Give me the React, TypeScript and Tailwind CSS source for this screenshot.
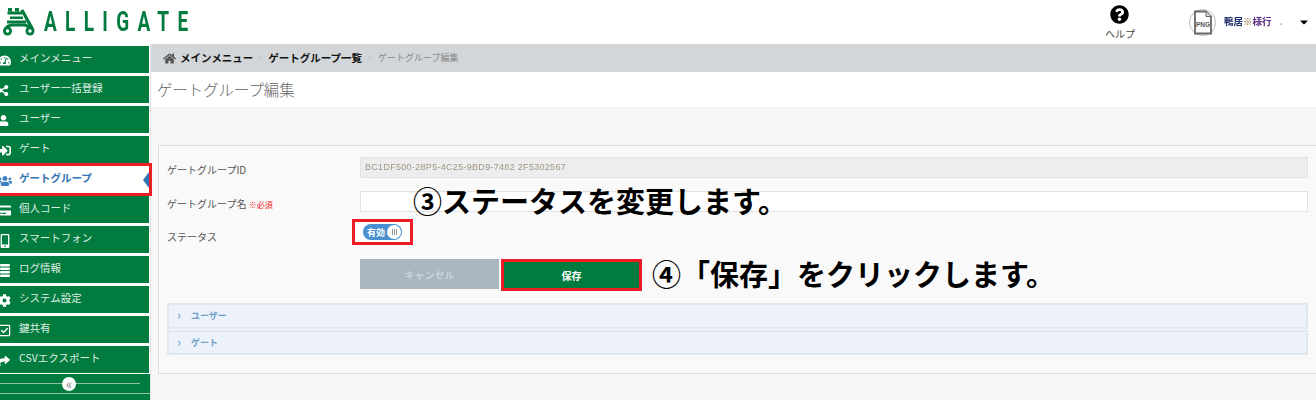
import type { ReactNode } from "react";
import {
  FaCaretDown,
  FaCog,
  FaCreditCard,
  FaHome,
  FaMobileAlt,
  FaQuestionCircle,
  FaRegCheckSquare,
  FaShare,
  FaShareAlt,
  FaSignInAlt,
  FaTachometerAlt,
  FaUser,
  FaUsers,
} from "react-icons/fa";

const jp = "font-['Noto_Sans_CJK_JP','Noto_Sans',sans-serif]";

interface NavItem {
  label: string;
  icon: ReactNode;
  active?: boolean;
}

// stacked bars for the log entry, thicker than the icon packs' versions
function LogIcon() {
  return (
    <svg width="13" height="13" viewBox="0 0 13 13" fill="currentColor" className="block">
      <rect x="2" y="0" width="10" height="2.4" rx="1" />
      <rect x="2" y="3.5" width="10" height="2.4" rx="1" />
      <rect x="2" y="7" width="10" height="2.4" rx="1" />
      <rect x="2" y="10.5" width="10" height="2.4" rx="1" />
    </svg>
  );
}

const navItems: NavItem[] = [
  { label: "メインメニュー", icon: <FaTachometerAlt size={13} /> },
  { label: "ユーザー一括登録", icon: <FaShareAlt size={11} /> },
  { label: "ユーザー", icon: <FaUser size={11} /> },
  { label: "ゲート", icon: <FaSignInAlt size={13} /> },
  { label: "ゲートグループ", icon: <FaUsers size={14} />, active: true },
  { label: "個人コード", icon: <FaCreditCard size={13} /> },
  { label: "スマートフォン", icon: <FaMobileAlt size={14} /> },
  { label: "ログ情報", icon: <LogIcon /> },
  { label: "システム設定", icon: <FaCog size={13} /> },
  { label: "鍵共有", icon: <FaRegCheckSquare size={13} /> },
  { label: "CSVエクスポート", icon: <FaShare size={12} /> },
];

function Logo() {
  return (
    <div className="flex items-center">
      <svg width="36" height="44" viewBox="0 0 36 44" fill="none" className="shrink-0">
        <g fill="#027b3f">
          <rect x="8" y="8" width="4" height="3.5" />
          <rect x="15" y="8" width="4" height="3.5" />
          <rect x="7.5" y="11.5" width="16" height="3" />
          <rect x="10" y="16.5" width="13" height="2.5" />
          <rect x="7" y="20.5" width="19" height="3" />
          <path d="M20.5 10l3-.5 10.5 19-3.5 1.5z" />
          <circle cx="7.5" cy="31" r="4.5" />
          <circle cx="30" cy="31" r="4.5" />
        </g>
        <path d="M5 30c1-3 4-5 8-5h11c3 0 5 2 7 5" stroke="#027b3f" strokeWidth="3" />
        <circle cx="7.5" cy="31" r="1.7" fill="#fff" />
        <circle cx="30" cy="31" r="1.7" fill="#fff" />
      </svg>
      <span className="ml-[8px] block w-[150px] origin-left scale-x-[0.68] whitespace-nowrap font-['Roboto',sans-serif] text-[28px] leading-none font-bold tracking-[12.2px] text-[#027b3f]">
        ALLIGATE
      </span>
    </div>
  );
}

function Header() {
  return (
    <header className="flex h-[44px] items-center bg-white">
      <Logo />
      <div className="ml-auto flex h-full">
        <div className="mr-px flex w-[30px] flex-col items-center pt-[5px] text-black">
          <FaQuestionCircle size={19} className="-ml-[2px]" />
          <span className="mt-[3px] text-[10px] leading-[14px] whitespace-nowrap text-[#444]">ヘルプ</span>
        </div>
        <div className="ml-[54px] flex items-center">
          <div className="-ml-px flex h-[27px] w-[27px] items-center justify-center rounded-full border border-[#bbb]">
            <svg width="20" height="25" viewBox="0 0 20 24">
              <path d="M2 1h11l5 5v17H2z" fill="#fff" stroke="#666" strokeWidth="1.8" />
              <path d="M13 1v5h5" fill="#ddd" stroke="#666" strokeWidth="1" />
              <text x="10" y="16" textAnchor="middle" fontSize="6.5" fontWeight="700" fill="#555" fontFamily="Liberation Sans">
                PNG
              </text>
            </svg>
          </div>
          <div className="ml-[8px] flex w-[61px] items-center text-[9.5px] leading-none font-bold blur-[0.5px]">
            <span className="text-[#1d2c6b]">鴨居</span>
            <span className="text-[#8a6d2f]">※</span>
            <span className="text-[#5a2d82]">様行</span>
            <span className="ml-[8px] text-[#9ab]">.</span>
          </div>
          <FaCaretDown size={12} className="mr-[6px] ml-[13px] text-black" />
        </div>
      </div>
    </header>
  );
}

function Sidebar() {
  return (
    <aside className="flex w-[151px] shrink-0 flex-col border-r border-[#e4e6e8] bg-white pt-[2px]">
      <ul className="flex w-[149px] flex-col gap-[3px]">
        {navItems.map((item) => (
          <li
            key={item.label}
            className={
              item.active
                ? "relative z-10 flex h-[27px] items-center bg-white text-[#2f74b5] outline-[3px] outline-[#ee1c25]"
                : "flex h-[27px] items-center bg-[#027b3f] text-[#dfeee5]"
            }
          >
            <span className={item.active ? "flex w-[19px] justify-start pt-[2px] text-[#3b7fc0]" : "flex w-[19px] justify-start pt-[2px] text-white"}>
              <span className="-ml-[2px]">{item.icon}</span>
            </span>
            <span className={item.active ? "pb-[3px] text-[10.5px] font-bold" : "pb-[3px] text-[10.5px]"}>{item.label}</span>
            {item.active && (
              <span className="absolute top-[6px] right-0 h-0 w-0 border-y-[8px] border-r-[6px] border-y-transparent border-r-[#2f74b5]" />
            )}
          </li>
        ))}
      </ul>
      <div className="mt-[1px] flex flex-1 flex-col bg-[#027b3f]">
        <div className="relative h-[20px] border-b border-[#8fbfa6]">
          <div className="mt-[9px] h-px w-[140px] bg-[#8fbfa6]" />
          <div className="absolute top-[3px] left-[62px] flex h-[14px] w-[14px] items-center justify-center rounded-full bg-white pb-[2px] text-[13px] leading-none text-[#888]">
            «
          </div>
        </div>
      </div>
    </aside>
  );
}

function Breadcrumb() {
  return (
    <nav className="flex h-[28px] items-center bg-[#d3d6d9] pl-[12px] text-[10.5px]">
      <FaHome size={13} className="text-[#555]" />
      <span className="ml-[4px] font-bold text-[#111]">メインメニュー</span>
      <span className="mx-[5px] w-[5px] text-[9px] text-[#bbb]">›</span>
      <span className="font-bold text-[#111]">ゲートグループ一覧</span>
      <span className="mx-[6px] w-[4px] text-[9px] text-[#bbb]">›</span>
      <span className="text-[9px] text-[#888]">ゲートグループ編集</span>
    </nav>
  );
}

function FormRow({ label, children, className, labelClass }: { label: ReactNode; children: ReactNode; className: string; labelClass: string }) {
  return (
    <div className={`flex items-center ${className}`}>
      <div className={`w-[193px] text-[10px] text-[#555] ${labelClass}`}>{label}</div>
      {children}
    </div>
  );
}

function AccordionRow({ label }: { label: string }) {
  return (
    <div className="flex h-[25.5px] items-center border-2 border-[#e0e7f0] bg-[#edf2fa] pl-[8px] text-[9px] font-bold text-[#6f9fc9]">
      <span className="w-[14px] pb-[2px] text-[13px] leading-none font-normal">›</span>
      {label}
    </div>
  );
}

function EditPanel() {
  return (
    <section className="mt-[37px] ml-[7px] h-[229px] border-y border-l border-[#d7dfe6] bg-[#f9f9f9] pt-[11px] pr-[8px] pl-[8px]">
      <FormRow label="ゲートグループID" className="h-[21px]" labelClass="pt-[4px]">
        <div className="flex h-[21px] flex-1 items-center border border-[#e2e2e2] bg-[#ededed] pl-[4px] font-['Liberation_Sans',sans-serif] text-[9px] tracking-[0.3px] text-[#a09484] blur-[0.6px]">
          BC1DF500-28P5-4C25-9BD9-7482 2F5302567
        </div>
      </FormRow>
      <FormRow
        label={
          <>
            ゲートグループ名 <span className="text-[8px] text-[#f01c25]">※必須</span>
          </>
        }
        className="mt-[13px] h-[21px]"
        labelClass="pt-[4px]"
      >
        <div className="h-[21px] flex-1 border border-[#e2e2e2] bg-white" />
      </FormRow>
      <FormRow label="ステータス" className="mt-[7px] h-[26px]" labelClass="pt-[8px]">
        <div className="-ml-[8px] flex h-[26px] w-[61px] items-center justify-center border-[3px] border-[#ee1c25] bg-white">
          <div className="flex h-[16px] w-[39px] items-center rounded-full bg-[#4a8fd0] pr-[1px] pl-[4px]">
            <span className="text-[9px] leading-none font-bold text-white">有効</span>
            <span className="ml-auto flex h-[14px] w-[14px] items-center justify-center gap-px rounded-full bg-white">
              <span className="h-[6px] w-px bg-[#999]" />
              <span className="h-[6px] w-px bg-[#999]" />
              <span className="h-[6px] w-px bg-[#999]" />
            </span>
          </div>
        </div>
      </FormRow>
      <div className="mt-[14px] flex h-[32px] items-start pl-[193px]">
        <div className="flex h-[30px] w-[139px] items-center justify-center bg-[#aab7c1] text-[10px] text-[#d8dfe3]">
          キャンセル
        </div>
        <div className="ml-[2px] flex h-[32px] w-[141px] items-center justify-center border-[3px] border-[#ee1c25] bg-[#027b3f] text-[10px] font-bold text-white">
          保存
        </div>
      </div>
      <div className="mt-[12px] flex flex-col gap-[1px]">
        <AccordionRow label="ユーザー" />
        <AccordionRow label="ゲート" />
      </div>
    </section>
  );
}

export default function App() {
  return (
    <div className={`relative flex h-[400px] w-[1316px] flex-col overflow-hidden bg-white ${jp}`}>
      <Header />
      <div className="flex min-h-0 flex-1">
        <Sidebar />
        <main className="min-w-0 flex-1 bg-[#f7f7f7]">
          <Breadcrumb />
          <div className="flex h-[36px] items-center border-b border-[#eeeeee] bg-white pl-[6px] text-[15.4px] font-light text-[#666]">
            ゲートグループ編集
          </div>
          <EditPanel />
        </main>
      </div>
      {/* annotations over the page */}
      <div className="absolute top-[181px] left-[413px] text-[29px] leading-[38px] font-bold whitespace-nowrap text-black">
        ③ステータスを変更します。
      </div>
      <div className="absolute top-[254px] left-[652px] text-[29px] leading-[38px] font-bold whitespace-nowrap text-black">
        ④「保存」をクリックします。
      </div>
    </div>
  );
}
